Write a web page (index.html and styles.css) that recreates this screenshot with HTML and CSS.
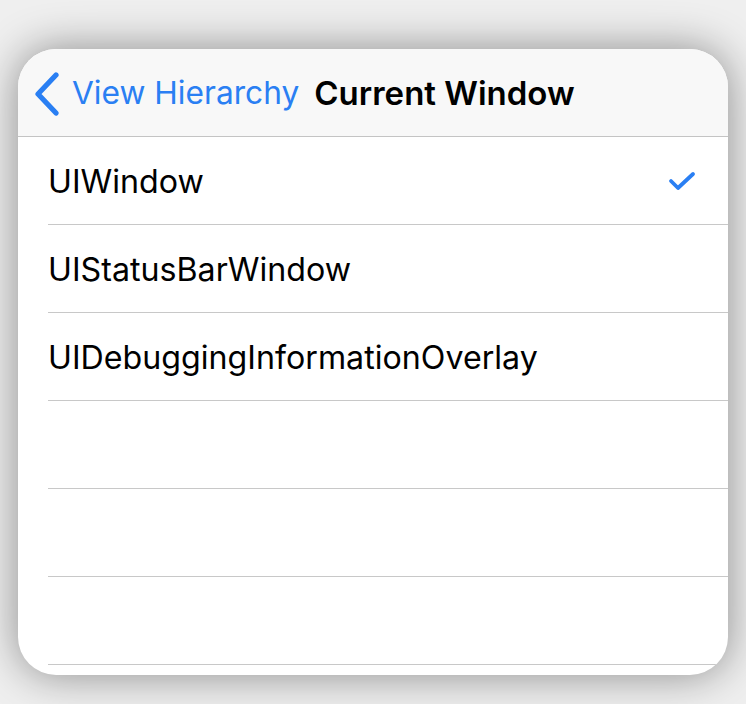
FILE: index.html
```html
<!DOCTYPE html>
<html>
<head>
<meta charset="utf-8">
<link rel="stylesheet" href="styles.css">
</head>
<body>
<div class="card">
  <div class="nav">
    <div class="back">
      <svg class="chev" width="28" height="44" viewBox="0 0 28 44"><path d="M23 3 L5 22 L23 41" fill="none" stroke="#2a7ff3" stroke-width="5.2" stroke-linecap="round" stroke-linejoin="round"/></svg>
      <span class="back-label">View Hierarchy</span>
    </div>
    <span class="title">Current Window</span>
  </div>
  <div class="list">
    <div class="row"><span class="label">UIWindow</span><svg class="check" width="28" height="22" viewBox="0 0 28 22"><path d="M3 11 L10 18 L25 4" fill="none" stroke="#2a7ff3" stroke-width="3.8" stroke-linecap="round" stroke-linejoin="round"/></svg></div>
    <div class="row"><span class="label">UIStatusBarWindow</span></div>
    <div class="row"><span class="label">UIDebuggingInformationOverlay</span></div>
    <div class="row"></div>
    <div class="row"></div>
    <div class="row"></div>
  </div>
</div>
</body>
</html>
```
FILE: styles.css
```css
html, body {
  margin: 0;
  padding: 0;
}
body {
  background: #efefef;
  width: 746px;
  height: 704px;
  overflow: hidden;
  padding: 49px 18px 0;
  box-sizing: border-box;
  font-family: Inter, "Noto Sans", sans-serif;
}
.card {
  width: 710px;
  height: 626px;
  background: #ffffff;
  border-radius: 38px;
  overflow: hidden;
  box-shadow: 0 0 44px rgba(0, 0, 0, 0.42);
}
.nav {
  height: 88px;
  box-sizing: border-box;
  background: #f8f8f8;
  border-bottom: 1px solid #c4c4c4;
  display: flex;
  align-items: center;
  padding-left: 15px;
}
.back {
  display: flex;
  align-items: center;
}
.chev {
  display: block;
  margin-right: 11px;
  margin-top: 2px;
}
.back-label {
  font-size: 31.7px;
  color: #2a7ff3;
}
.title {
  font-size: 33px;
  font-weight: 600;
  color: #000;
  margin-left: 15px;
}
.row {
  height: 88px;
  box-sizing: border-box;
  margin-left: 30px;
  border-bottom: 1px solid #c8c8c8;
  display: flex;
  align-items: center;
  justify-content: space-between;
  padding-right: 32px;
}
.label {
  font-size: 32.2px;
  color: #000;
  margin-top: 2px;
}
.check {
  display: block;
}
```
